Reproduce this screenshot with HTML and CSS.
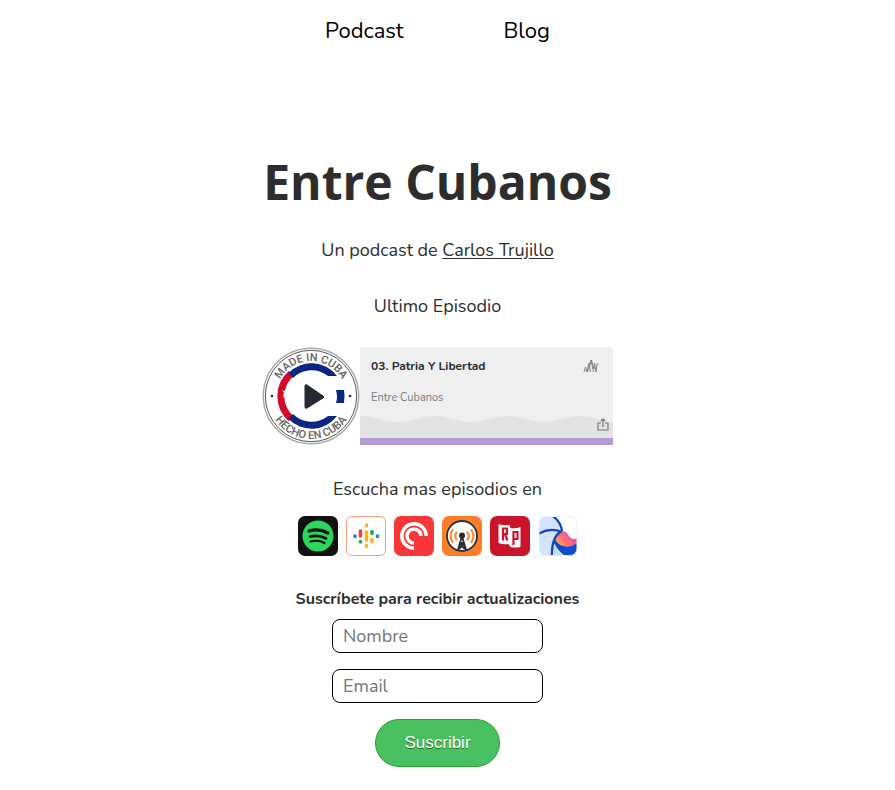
FILE: index.html
```html
<!DOCTYPE html>
<html lang="es">
<head>
<meta charset="utf-8">
<meta name="viewport" content="width=device-width, initial-scale=1">
<title>Entre Cubanos</title>
<link rel="stylesheet" href="styles.css">
</head>
<body>
<nav class="nav">
  <a href="#podcast">Podcast</a>
  <a href="#blog">Blog</a>
</nav>
<main class="main" id="podcast">
  <h1 class="title">Entre Cubanos</h1>
  <p class="author">Un podcast de <a href="#autor">Carlos Trujillo</a></p>
  <h2 class="subtitle">Ultimo Episodio</h2>

  <section class="player" aria-label="Reproductor">
    <button class="cover" type="button" aria-label="Reproducir">
      <svg viewBox="0 0 98 98">
        <defs>
          <path id="arc-top" d="M14 49A35 35 0 0 1 84 49"/>
          <path id="arc-bottom" d="M6 49A43 43 0 0 0 92 49"/>
        </defs>
        <circle cx="49" cy="49" r="47.700" fill="#fff" stroke="#aaa" stroke-width="1.500"/>
        <circle cx="49" cy="49" r="45.700" fill="none" stroke="#555" stroke-width="1"/>
        <path d="M29 26.500A30 30 0 0 0 29 71.500" fill="none" stroke="#d40a2b" stroke-width="7"/>
        <path d="M26.500 26A32 32 0 0 1 75 29H66A26 26 0 0 0 31 31ZM26.500 72A32 32 0 0 0 75 69H66A26 26 0 0 1 31 67Z" fill="#0b2583"/>
        <path d="M74 43h8q1 6 0 13h-8q2-6 0-13Z" fill="#0b2583"/>
        <path d="m20 43 2 1 3-1-1 3 2 2-3 1-1 2-1-2 1-3Z" fill="#fff"/>
        <circle cx="10" cy="49" r="1.300" fill="#333"/><circle cx="88" cy="49" r="1.300" fill="#333"/>
        <text class="seal"><textPath href="#arc-top" startOffset="50%">MADE IN CUBA</textPath></text>
        <text class="seal"><textPath href="#arc-bottom" startOffset="50%">HECHO EN CUBA</textPath></text>
        <path d="M43 39v21q0 2 2 1l16-10q2-1 0-2L45 38q-2-1-2 1Z" fill="#242a30" stroke="#242a30"/>
      </svg>
    </button>
    <div class="episode">
      <div class="episode-head">
        <h3>03. Patria Y Libertad</h3>
        <svg class="wave-logo" viewBox="0 0 16 16"><path d="M1 14 2.500 9 4 14 6 5l1.500 9M4.500 14 8 2l2.500 12M7 7l1.500-5L11 11l.5-6L13 14l1-8h1.500" fill="none" stroke="#808388" stroke-width="1" stroke-linejoin="round"/></svg>
      </div>
      <p>Entre Cubanos</p>
      <div class="waves">
        <svg class="hills" viewBox="0 0 253 22" preserveAspectRatio="none"><path d="M0 0C17 0 22 6 38 6S59 0 74 0 96 6 111 6 132 0 147 0 169 6 184 6 205 0 220 0 238 5 253 6V22H0Z" fill="#e3e3e3"/></svg>
        <button class="share" type="button" aria-label="Compartir"><svg viewBox="0 0 12 14"><path d="M4 5H1v7h10V5H8M6 9V1M4 3l2-2 2 2" fill="none" stroke="#777" stroke-width="1.200"/></svg></button>
      </div>
    </div>
  </section>

  <h2 class="listen">Escucha mas episodios en</h2>
  <div class="apps">
    <a href="#spotify" aria-label="Spotify"><svg viewBox="0 0 40 40"><rect width="40" height="40" rx="7" fill="#111"/><circle cx="20" cy="20" r="15.500" fill="#2bd65b"/><g fill="none" stroke="#111" stroke-linecap="round"><path d="M11 15q10-3 19 2" stroke-width="3.200"/><path d="M12 20.500q9-2 16 2" stroke-width="2.600"/><path d="M12.500 25.500q8-2 14 1.500" stroke-width="2.200"/></g></svg></a>
    <a href="#google" aria-label="Google Podcasts"><svg viewBox="0 0 40 40"><rect x=".5" y=".5" width="39" height="39" rx="5" fill="#fff" stroke="#f79a76"/><g fill="none" stroke-width="3.600" stroke-linecap="round"><path d="M20.500 9v1M20.500 16v8M20.500 29.500v1M26 23.500v2" stroke="#fbb51b"/><path d="M26 15.500v2" stroke="#31a653"/><path d="M14.500 15v5" stroke="#e94235"/><path d="M14.500 25.500v.5" stroke="#31a653"/><path d="M9 20v.5M31.500 20v.5" stroke="#3077e3"/></g></svg></a>
    <a href="#pocketcasts" aria-label="Pocket Casts"><svg viewBox="0 0 40 40"><rect width="40" height="40" rx="7" fill="#f93739"/><g fill="none" stroke="#fff" stroke-width="3.500"><path d="M20 32.200A12.200 12.200 0 1 1 32.200 20"/><path d="M20 27A7 7 0 1 1 27 20"/></g></svg></a>
    <a href="#overcast" aria-label="Overcast"><svg viewBox="0 0 40 40"><rect width="40" height="40" rx="7" fill="#fc7e2b"/><circle cx="20" cy="20" r="15" fill="#fff" stroke="#303238" stroke-width="1.800"/><g fill="none" stroke="#fc8b3c" stroke-width="2.200" stroke-linecap="round"><path d="M10.500 14q-4 6 0 12M14.500 16.500q-2.500 3.500 0 7M29.500 14q4 6 0 12M25.500 16.500q2.500 3.500 0 7"/></g><path d="M20 20 16 34M20 20l4 14M18 26l5 4M22 26l-5 4M17 33l3-3 3 3" fill="none" stroke="#292b31" stroke-width="1.800"/><circle cx="20" cy="19.500" r="3" fill="#292b31"/></svg></a>
    <a href="#radiopublic" aria-label="RadioPublic"><svg viewBox="0 0 40 40"><rect width="40" height="40" rx="7" fill="#c9142a"/><path d="M8.500 8q6 2 11 1l1 3q5 1 10-1v20q-5 1-10 0l-2-3q-5 1-10-1Z" fill="#fff"/><g fill="none" stroke="#c9142a" stroke-width="2.200"><path d="M13 24.500V12.500h4v5.500h-4M15 18l2.500 6.500M23.500 29V16h4v7h-4"/></g></svg></a>
    <a href="#breaker" aria-label="Breaker"><svg viewBox="0 0 40 40"><defs><linearGradient id="sun" x1="0" y1="1" x2="1" y2=".3"><stop stop-color="#ffc247"/><stop offset=".5" stop-color="#ff756a"/><stop offset="1" stop-color="#e03dc5"/></linearGradient><clipPath id="tile"><rect x="1" width="38" height="40" rx="7"/></clipPath></defs><g clip-path="url(#tile)"><path d="M0 0h40v40H0Z" fill="#fff"/><path d="M0 0h16q7 6 8 15L17 22l-2 18H0Z" fill="#d2e4ff"/><path d="M16 22q4 11 16 18H13Z" fill="#c4dcff"/><path d="M17 24q-1-7 5-8.500 6-1.500 8 3 3 6 10 4v11H23Z" fill="url(#sun)"/><path d="M16 22q3 7 11 8.500 7 1 13-4v14H28q-9-6-12-18Z" fill="#0b4bd0"/><path d="M15 0q8 6 9 15M0 18q12-7 24-2M23 15.500q-10 6-9 25M16 23q3 11 14 17" fill="none" stroke="#1248b5" stroke-width="2.200"/></g><rect x="1" y=".5" width="38" height="39" rx="7" fill="none" stroke="#eceff5"/></svg></a>
  </div>

  <form class="form" action="#">
    <h2>Suscríbete para recibir actualizaciones</h2>
    <input type="text" name="nombre" placeholder="Nombre" aria-label="Nombre">
    <input type="email" name="email" placeholder="Email" aria-label="Email">
    <button type="submit">Suscribir</button>
  </form>
</main>
</body>
</html>
```
FILE: styles.css
```css
* { box-sizing: border-box; }
body {
  margin: 0;
  padding: 0 20px 20px 0;
  background: #fff;
  color: #2d2d2d;
  font: 18px/24px Nunito, Lato, sans-serif;
}
h1, h2, h3, p { margin: 0; font-weight: 400; }
button { padding: 0; border: 0; background: none; cursor: pointer; }
svg { display: block; width: 100%; height: 100%; }
.nav {
  display: flex;
  justify-content: center;
  gap: 100px;
  padding-top: 16px;
  font-size: 22px;
  line-height: 30px;
}
.nav a { color: #000; text-decoration: none; }
.main {
  display: flex;
  flex-direction: column;
  align-items: center;
  padding-top: 104px;
  text-align: center;
}
.title { font: 700 48px/64px "Trebuchet MS", "Open Sans", sans-serif; }
.author { margin-top: 24px; }
.author a { color: inherit; text-underline-offset: 2px; }
.subtitle { margin-top: 32px; font-size: 18px; }
.player {
  display: flex;
  width: 351px;
  max-width: 100%;
  margin-top: 29px;
  overflow: hidden;
  border-radius: 4px 4px 0 0;
  text-align: left;
}
.cover { flex: none; width: 98px; height: 98px; }
.seal {
  fill: #666;
  font: 500 11px Roboto, sans-serif;
  text-anchor: middle;
}
.episode {
  display: flex;
  flex: 1;
  flex-direction: column;
  border-bottom: 7px solid #b19cd9;
  background: #efefef;
}
.episode-head {
  display: flex;
  justify-content: space-between;
  padding: 11px 14px 0 11px;
}
.episode h3 {
  color: #242a30;
  font-size: 12px;
  font-weight: 700;
  line-height: 16px;
}
.wave-logo { width: 16px; height: 16px; }
.episode p {
  padding: 16px 11px 0;
  color: #777a7f;
  font-size: 11px;
  line-height: 16px;
}
.waves { position: relative; height: 22px; margin-top: auto; }
.share {
  position: absolute;
  right: 4px;
  bottom: 6px;
  width: 12px;
  height: 14px;
}
.listen { margin-top: 32px; font-size: 18px; }
.apps { display: flex; gap: 8px; margin-top: 15px; }
.apps a { width: 40px; height: 40px; }
.form {
  display: flex;
  flex-direction: column;
  align-items: center;
  margin-top: 31px;
}
.form h2 { font-size: 16px; font-weight: 700; }
.form input {
  width: 211px;
  height: 34px;
  margin: 8px 0;
  padding: 0 10px;
  border: 1px solid #000;
  border-radius: 8px;
  font: inherit;
}
.form input::placeholder { color: #757575; opacity: 1; }
.form button {
  margin-top: 8px;
  padding: 12px 28px;
  border: 1px solid #28a52e;
  border-radius: 28px;
  background: #48bf60;
  color: #fff;
  font: 17px/22px "Liberation Sans", Arial, sans-serif;
  text-shadow: 0 1px 0 #2f6627;
}
```
